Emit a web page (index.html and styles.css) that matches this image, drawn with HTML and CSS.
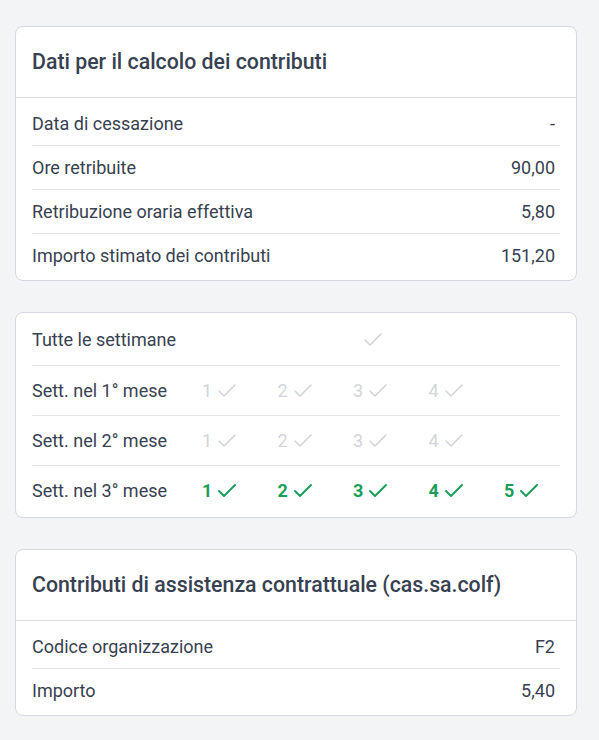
FILE: index.html
```html
<!DOCTYPE html>
<html lang="it">
<head>
<meta charset="utf-8">
<link rel="stylesheet" href="styles.css">
</head>
<body>
<main class="page">
  <section class="card">
    <header class="card-head"><h2>Dati per il calcolo dei contributi</h2></header>
    <div class="list">
      <div class="row"><span>Data di cessazione</span><span class="val">-</span></div>
      <div class="row"><span>Ore retribuite</span><span class="val">90,00</span></div>
      <div class="row"><span>Retribuzione oraria effettiva</span><span class="val">5,80</span></div>
      <div class="row"><span>Importo stimato dei contributi</span><span class="val">151,20</span></div>
    </div>
  </section>

  <section class="card">
    <div class="weeks">
      <div class="wrow">
        <span class="wlabel">Tutte le settimane</span>
        <span class="wk all off"><svg viewBox="0 0 24 24"><polyline points="20 6 9 17 4 12"/></svg></span>
      </div>
      <div class="wrow">
        <span class="wlabel">Sett. nel 1° mese</span>
        <span class="wk off">1<svg viewBox="0 0 24 24"><polyline points="20 6 9 17 4 12"/></svg></span>
        <span class="wk off">2<svg viewBox="0 0 24 24"><polyline points="20 6 9 17 4 12"/></svg></span>
        <span class="wk off">3<svg viewBox="0 0 24 24"><polyline points="20 6 9 17 4 12"/></svg></span>
        <span class="wk off">4<svg viewBox="0 0 24 24"><polyline points="20 6 9 17 4 12"/></svg></span>
      </div>
      <div class="wrow">
        <span class="wlabel">Sett. nel 2° mese</span>
        <span class="wk off">1<svg viewBox="0 0 24 24"><polyline points="20 6 9 17 4 12"/></svg></span>
        <span class="wk off">2<svg viewBox="0 0 24 24"><polyline points="20 6 9 17 4 12"/></svg></span>
        <span class="wk off">3<svg viewBox="0 0 24 24"><polyline points="20 6 9 17 4 12"/></svg></span>
        <span class="wk off">4<svg viewBox="0 0 24 24"><polyline points="20 6 9 17 4 12"/></svg></span>
      </div>
      <div class="wrow">
        <span class="wlabel">Sett. nel 3° mese</span>
        <span class="wk on">1<svg viewBox="0 0 24 24"><polyline points="20 6 9 17 4 12"/></svg></span>
        <span class="wk on">2<svg viewBox="0 0 24 24"><polyline points="20 6 9 17 4 12"/></svg></span>
        <span class="wk on">3<svg viewBox="0 0 24 24"><polyline points="20 6 9 17 4 12"/></svg></span>
        <span class="wk on">4<svg viewBox="0 0 24 24"><polyline points="20 6 9 17 4 12"/></svg></span>
        <span class="wk on">5<svg viewBox="0 0 24 24"><polyline points="20 6 9 17 4 12"/></svg></span>
      </div>
    </div>
  </section>

  <section class="card">
    <header class="card-head"><h2>Contributi di assistenza contrattuale (cas.sa.colf)</h2></header>
    <div class="list">
      <div class="row"><span>Codice organizzazione</span><span class="val">F2</span></div>
      <div class="row"><span>Importo</span><span class="val">5,40</span></div>
    </div>
  </section>
</main>
</body>
</html>
```

FILE: styles.css
```css
* { box-sizing: border-box; }
html, body { margin: 0; padding: 0; }
body {
  background: #f3f4f6;
  font-family: Roboto, "Liberation Sans", sans-serif;
  color: #374151;
  font-size: 18px;
}
.page {
  padding: 26px 22px 20px 15px;
  display: flex;
  flex-direction: column;
  gap: 31px;
}
.card {
  background: #fff;
  border: 1px solid #d5d8de;
  border-radius: 8px;
  overflow: hidden;
}
.card-head {
  padding: 21px 16px;
  border-bottom: 1px solid #dcdfe4;
}
.card-head h2 {
  margin: 0;
  font-size: 21.3px;
  line-height: 28px;
  font-weight: 500;
  color: #374151;
}
.list {
  padding: 4px 16px 3px;
}
.row {
  display: flex;
  justify-content: space-between;
  align-items: center;
  padding: 10px 0;
  line-height: 23px;
}
.row + .row { border-top: 1px solid #e2e4e8; }
.val { padding-right: 5px; }

.weeks { padding: 2px 16px 2px; }
.wrow {
  display: grid;
  grid-template-columns: 170px repeat(4, 75.5px) 1fr;
  align-items: center;
  height: 50px;
}
.wrow + .wrow { border-top: 1px solid #e2e4e8; }
.wlabel { line-height: 24px; }
.wk {
  display: flex;
  align-items: center;
  line-height: 24px;
}
.wk svg {
  width: 24px;
  height: 24px;
  margin-left: 3px;
  fill: none;
  stroke-linecap: round;
  stroke-linejoin: round;
}
.wk.off { color: #d1d5db; }
.wk.off svg { stroke: #d1d5db; stroke-width: 1.6; }
.wk.on { color: #1a9f5a; font-weight: 700; }
.wk.on svg { stroke: #1a9f5a; stroke-width: 2; }
.wk.all { grid-column: 4; margin-left: 5px; }
```
